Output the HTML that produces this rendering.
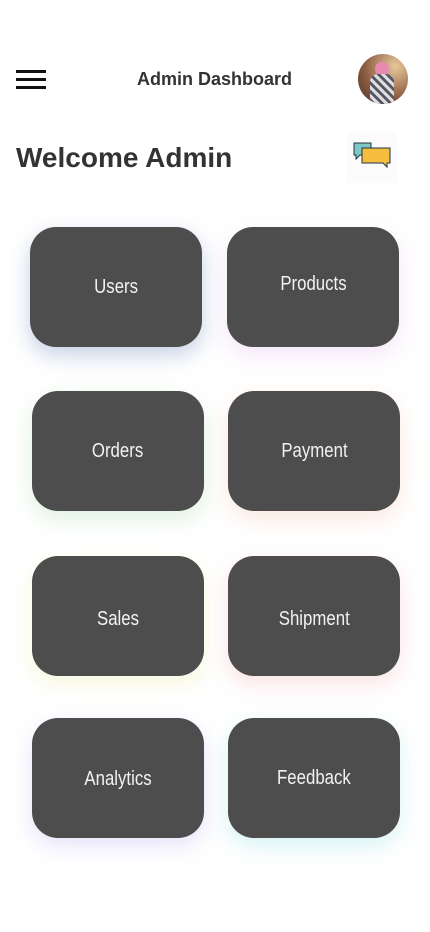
<!DOCTYPE html>
<html><head><meta charset="utf-8"><style>
html,body{margin:0;padding:0;background:#fff;width:430px;height:932px;overflow:hidden;font-family:"Liberation Sans",Arial,sans-serif;position:relative}
.a{position:absolute}
.ham{left:16px;width:30px;height:3px;background:#111}
.card{position:absolute;width:172px;height:120px;border-radius:26px;background:#4d4d4d;color:#f2f2f2;font-size:20px;display:flex;align-items:center;justify-content:center}
.card span{display:inline-block;transform:scaleX(0.84)}
</style></head><body>
<div class="a ham" style="top:70px"></div>
<div class="a ham" style="top:78px"></div>
<div class="a ham" style="top:86px"></div>
<div class="a" style="left:137px;top:69px;font-size:18px;font-weight:bold;color:#333">Admin Dashboard</div>
<div class="a" style="left:358px;top:54px;width:50px;height:50px;border-radius:50%;overflow:hidden;background:radial-gradient(circle at 75% 25%,#e8c89a,#8a5a40 60%,#4a3028)">
<div class="a" style="left:17px;top:8px;width:14px;height:14px;border-radius:50%;background:#e88ab0"></div>
<div class="a" style="left:12px;top:20px;width:24px;height:32px;border-radius:8px 8px 0 0;background:repeating-linear-gradient(45deg,#ddd 0 3px,#556 3px 6px)"></div>
</div>
<div class="a" style="left:16px;top:142px;font-size:28px;font-weight:bold;color:#333">Welcome Admin</div>
<div class="a" style="left:347px;top:133px;width:50px;height:50px;background:#fbfbfb">
<svg width="50" height="50" viewBox="0 0 50 50"><path d="M7 10h17v12H13l-4 4v-4H7z" fill="#7fc7c4" stroke="#234" stroke-width="1"/><path d="M15 15h28v15h-3v4l-4-4H15z" fill="#f5be3c" stroke="#234" stroke-width="1"/></svg>
</div>
<div class="card" style="left:30px;top:227px;box-shadow:0 8px 22px rgba(90,120,180,.35)"><span>Users</span></div>
<div class="card" style="left:227px;top:227px;box-shadow:0 8px 22px rgba(220,170,230,.3);padding-bottom:6px;box-sizing:border-box"><span>Products</span></div>
<div class="card" style="left:32px;top:391px;box-shadow:0 8px 22px rgba(150,210,150,.3)"><span>Orders</span></div>
<div class="card" style="left:228px;top:391px;box-shadow:0 8px 22px rgba(240,180,150,.3)"><span>Payment</span></div>
<div class="card" style="left:32px;top:556px;box-shadow:0 8px 22px rgba(230,230,150,.3);padding-top:6px;box-sizing:border-box"><span>Sales</span></div>
<div class="card" style="left:228px;top:556px;box-shadow:0 8px 22px rgba(240,160,170,.3);padding-top:6px;box-sizing:border-box"><span>Shipment</span></div>
<div class="card" style="left:32px;top:718px;box-shadow:0 8px 22px rgba(180,160,240,.3);padding-top:3px;box-sizing:border-box"><span>Analytics</span></div>
<div class="card" style="left:228px;top:718px;box-shadow:0 8px 22px rgba(140,220,220,.35)"><span>Feedback</span></div>
</body></html>
